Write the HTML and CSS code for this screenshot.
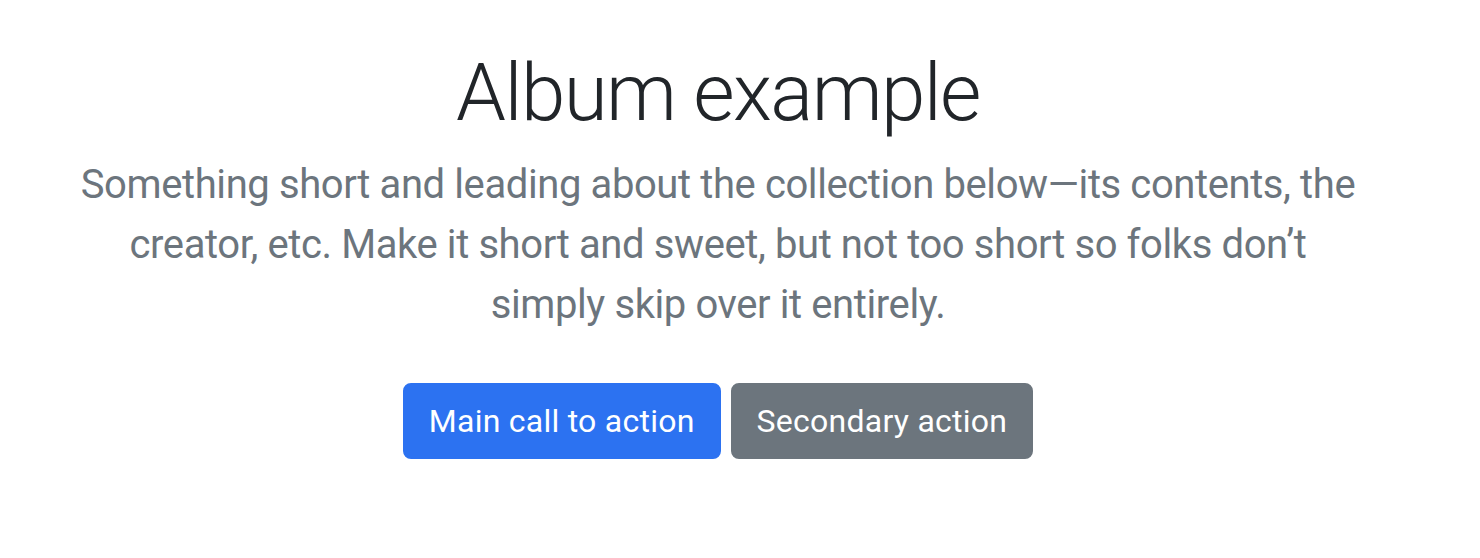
FILE: index.html
```html
<!DOCTYPE html>
<html lang="en">
<head>
<meta charset="utf-8">
<title>Album example</title>
<link rel="stylesheet" href="styles.css">
</head>
<body>
<section class="hero">
  <div class="hero-col">
    <h1 class="hero-title">Album example</h1>
    <p class="lead">Something short and leading about the collection below—its contents, the creator, etc. Make it short and sweet, but not too short so folks don’t simply skip over it entirely.</p>
    <div class="actions">
      <a href="#" class="btn btn-primary">Main call to action</a>
      <a href="#" class="btn btn-secondary">Secondary action</a>
    </div>
  </div>
</section>
</body>
</html>
```
FILE: styles.css
```css
html, body {
  margin: 0;
  padding: 0;
  background: #fff;
}
body {
  font-family: Roboto, "Noto Sans", "Liberation Sans", sans-serif;
  color: #212529;
  width: 1436px;
}
.hero {
  padding-top: 45px;
  display: flex;
  justify-content: center;
  text-align: center;
}
.hero-col {
  width: 1300px;
}
.hero-title {
  margin: 0 0 14px;
  font-size: 80px;
  line-height: 96px;
  font-weight: 300;
  letter-spacing: -1.6px;
  color: #212529;
}
.lead {
  margin: 0 0 48px;
  font-size: 40px;
  line-height: 60px;
  font-weight: 400;
  letter-spacing: -0.4px;
  color: #6c757d;
}
.actions {
  display: flex;
  justify-content: center;
  gap: 10px;
}
.btn {
  display: inline-block;
  padding: 12px 24px;
  font-size: 32px;
  line-height: 48px;
  letter-spacing: 0.25px;
  border: 2px solid transparent;
  border-radius: 8px;
  color: #fff;
  text-decoration: none;
}
.btn-primary {
  background: #2c72f1;
  border-color: #2c72f1;
}
.btn-secondary {
  background: #6c757d;
  border-color: #6c757d;
}
```
